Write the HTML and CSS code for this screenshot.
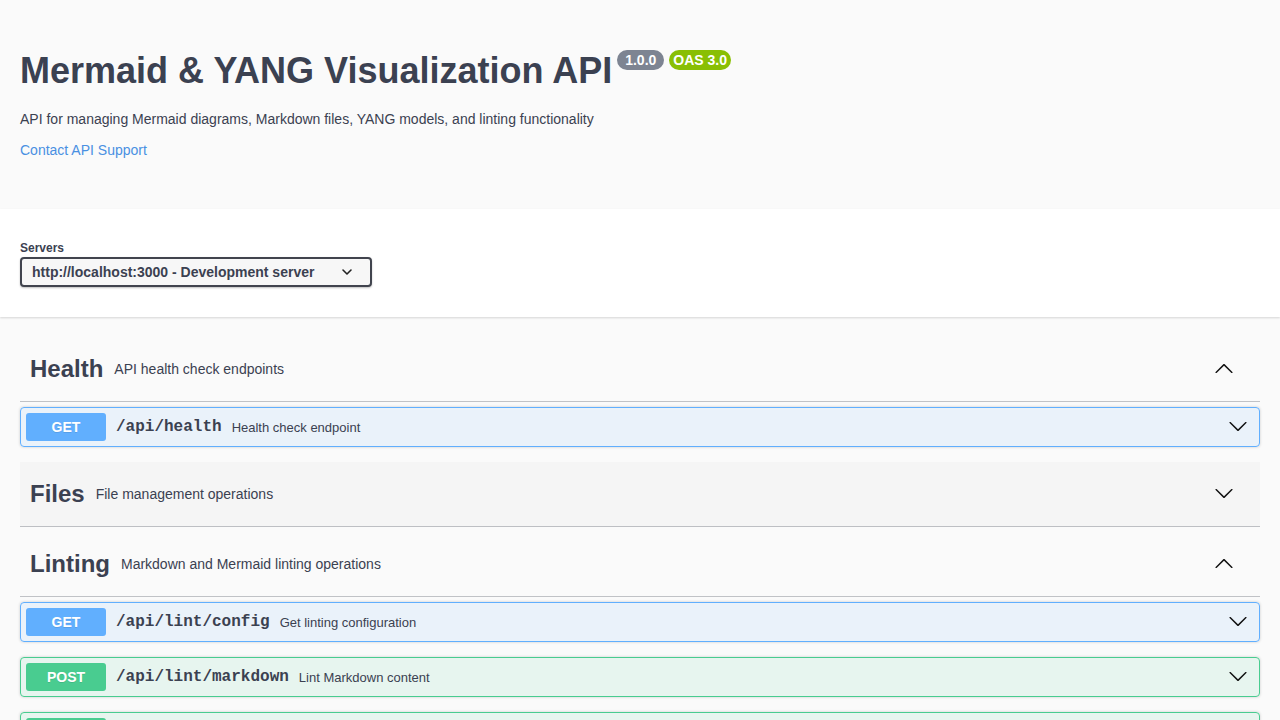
FILE: index.html
```html
<!DOCTYPE html>
<html lang="en">
<head>
<meta charset="utf-8">
<title>Mermaid &amp; YANG Visualization API</title>
<link rel="stylesheet" href="styles.css">
</head>
<body>
<div class="swagger">
  <div class="wrapper">
    <section class="info">
      <h2 class="title">
        <span class="title-text">Mermaid &amp; YANG Visualization API</span>
        <small class="badge badge-version">1.0.0</small>
        <small class="badge badge-oas">OAS 3.0</small>
      </h2>
      <p class="description">API for managing Mermaid diagrams, Markdown files, YANG models, and linting functionality</p>
      <div class="contact"><a class="link" href="#">Contact API Support</a></div>
    </section>
  </div>

  <div class="scheme-container">
    <div class="wrapper">
      <div class="servers-title">Servers</div>
      <div class="select">
        <span class="select-text">http://localhost:3000 - Development server</span>
        <svg class="select-arrow" width="12" height="12" viewBox="0 0 12 12"><polyline points="2,4 6,8 10,4" fill="none" stroke="#222" stroke-width="1.6" stroke-linecap="round" stroke-linejoin="round"/></svg>
      </div>
    </div>
  </div>

  <div class="wrapper">
    <section class="tag-section">
      <h3 class="tag">
        <span class="tag-name">Health</span>
        <small class="tag-desc">API health check endpoints</small>
        <button class="expand"><svg width="20" height="20" viewBox="0 0 20 20"><path d="M17.418 14.908c.272.268.709.268.979 0s.271-.701 0-.969l-7.908-7.83c-.27-.268-.707-.268-.979 0l-7.908 7.83c-.27.268-.27.701 0 .969.271.268.709.268.979 0L10 7.767l7.418 7.141z"/></svg></button>
      </h3>
      <div class="opblock get">
        <div class="summary">
          <span class="method">GET</span>
          <span class="path">/api/health</span>
          <span class="op-desc">Health check endpoint</span>
          <button class="control"><svg width="20" height="20" viewBox="0 0 20 20"><path d="M17.418 6.109c.272-.268.709-.268.979 0s.271.701 0 .969l-7.908 7.83c-.27.268-.707.268-.979 0l-7.908-7.83c-.27-.268-.27-.701 0-.969.271-.268.709-.268.979 0L10 13.25l7.418-7.141z"/></svg></button>
        </div>
      </div>
    </section>

    <section class="tag-section">
      <h3 class="tag tag-hover">
        <span class="tag-name">Files</span>
        <small class="tag-desc">File management operations</small>
        <button class="expand"><svg width="20" height="20" viewBox="0 0 20 20"><path d="M17.418 6.109c.272-.268.709-.268.979 0s.271.701 0 .969l-7.908 7.83c-.27.268-.707.268-.979 0l-7.908-7.83c-.27-.268-.27-.701 0-.969.271-.268.709-.268.979 0L10 13.25l7.418-7.141z"/></svg></button>
      </h3>
    </section>

    <section class="tag-section">
      <h3 class="tag">
        <span class="tag-name">Linting</span>
        <small class="tag-desc">Markdown and Mermaid linting operations</small>
        <button class="expand"><svg width="20" height="20" viewBox="0 0 20 20"><path d="M17.418 14.908c.272.268.709.268.979 0s.271-.701 0-.969l-7.908-7.83c-.27-.268-.707-.268-.979 0l-7.908 7.83c-.27.268-.27.701 0 .969.271.268.709.268.979 0L10 7.767l7.418 7.141z"/></svg></button>
      </h3>
      <div class="opblock get">
        <div class="summary">
          <span class="method">GET</span>
          <span class="path">/api/lint/config</span>
          <span class="op-desc">Get linting configuration</span>
          <button class="control"><svg width="20" height="20" viewBox="0 0 20 20"><path d="M17.418 6.109c.272-.268.709-.268.979 0s.271.701 0 .969l-7.908 7.83c-.27.268-.707.268-.979 0l-7.908-7.83c-.27-.268-.27-.701 0-.969.271-.268.709-.268.979 0L10 13.25l7.418-7.141z"/></svg></button>
        </div>
      </div>
      <div class="opblock post">
        <div class="summary">
          <span class="method">POST</span>
          <span class="path">/api/lint/markdown</span>
          <span class="op-desc">Lint Markdown content</span>
          <button class="control"><svg width="20" height="20" viewBox="0 0 20 20"><path d="M17.418 6.109c.272-.268.709-.268.979 0s.271.701 0 .969l-7.908 7.83c-.27.268-.707.268-.979 0l-7.908-7.83c-.27-.268-.27-.701 0-.969.271-.268.709-.268.979 0L10 13.25l7.418-7.141z"/></svg></button>
        </div>
      </div>
      <div class="opblock post">
        <div class="summary">
          <span class="method">POST</span>
          <span class="path">/api/lint/mermaid</span>
          <span class="op-desc">Lint Mermaid diagram</span>
          <button class="control"><svg width="20" height="20" viewBox="0 0 20 20"><path d="M17.418 6.109c.272-.268.709-.268.979 0s.271.701 0 .969l-7.908 7.83c-.27.268-.707.268-.979 0l-7.908-7.83c-.27-.268-.27-.701 0-.969.271-.268.709-.268.979 0L10 13.25l7.418-7.141z"/></svg></button>
        </div>
      </div>
    </section>
  </div>
</div>
</body>
</html>
```

FILE: styles.css
```css
html, body {
  margin: 0;
  padding: 0;
  background: #fafafa;
}

.swagger {
  font-family: "Liberation Sans", Arial, sans-serif;
  color: #3b4151;
}

.wrapper {
  max-width: 1460px;
  margin: 0 auto;
  padding: 0 20px;
  box-sizing: border-box;
}

/* ---------- info ---------- */
.info {
  margin: 50px 0 48px;
}

.title {
  display: flex;
  align-items: flex-start;
  margin: 0;
  font-size: 36px;
  font-weight: 700;
  line-height: 41px;
  color: #3b4151;
}

.badge {
  display: inline-block;
  margin-left: 5px;
  margin-top: 0;
  font-size: 14px;
  font-weight: 700;
  line-height: 16px;
  color: #fff;
  border-radius: 57px;
}

.badge-version {
  background: #7d8492;
  padding: 2px 8px;
}

.badge-oas {
  background: #89bf04;
  padding: 2px 4px;
}

.description {
  margin: 18px 0 0;
  font-size: 14px;
  line-height: 21px;
}

.contact {
  margin-top: 10px;
  font-size: 14px;
  line-height: 21px;
}

.link {
  color: #4990e2;
  text-decoration: none;
}

/* ---------- servers ---------- */
.scheme-container {
  background: #fff;
  box-shadow: 0 1px 2px 0 rgba(0, 0, 0, .15);
  padding: 30px 0;
  margin: 0 0 20px;
}

.servers-title {
  font-size: 12px;
  font-weight: 700;
  line-height: 18px;
}

.select {
  display: flex;
  align-items: center;
  width: 352px;
  height: 30px;
  box-sizing: border-box;
  padding: 0 17px 0 10px;
  border: 2px solid #41444e;
  border-radius: 4px;
  background: #f7f7f7;
  box-shadow: 0 1px 2px 0 rgba(0, 0, 0, .25);
  font-size: 14px;
  font-weight: 700;
}

.select-text {
  flex: 1;
  white-space: nowrap;
}

.select-arrow {
  flex: none;
}

/* ---------- tags ---------- */
.tag-section {
  display: flex;
  flex-direction: column;
}

.tag {
  display: flex;
  align-items: center;
  height: 65px;
  box-sizing: border-box;
  margin: 0 0 5px;
  padding: 0 20px 0 10px;
  border-bottom: 1px solid rgba(59, 65, 81, .3);
  font-size: 24px;
  font-weight: 700;
  color: #3b4151;
}

.tag-hover {
  background: rgba(0, 0, 0, .02);
}

.tag-name {
  white-space: nowrap;
}

.tag-desc {
  flex: 1;
  padding: 0 10px 0 11px;
  font-size: 14px;
  font-weight: 400;
}

.expand,
.control {
  display: flex;
  align-items: center;
  border: none;
  background: none;
  padding: 0 6px 2px;
  cursor: pointer;
}

.expand svg,
.control svg {
  fill: #111;
}

/* ---------- opblocks ---------- */
.opblock {
  margin: 0 0 15px;
  border: 1px solid #000;
  border-radius: 4px;
  box-shadow: 0 0 3px rgba(0, 0, 0, .19);
}

.opblock.get {
  background: rgba(97, 175, 254, .1);
  border-color: #61affe;
}

.opblock.post {
  background: rgba(73, 204, 144, .1);
  border-color: #49cc90;
}

.summary {
  display: flex;
  align-items: center;
  padding: 5px;
}

.method {
  min-width: 80px;
  padding: 6px 0;
  border-radius: 3px;
  font-size: 14px;
  font-weight: 700;
  line-height: 16px;
  text-align: center;
  color: #fff;
  text-shadow: 0 1px 0 rgba(0, 0, 0, .1);
}

.get .method {
  background: #61affe;
}

.post .method {
  background: #49cc90;
}

.path {
  padding: 0 10px;
  font-family: "Liberation Mono", "Courier New", monospace;
  font-size: 16px;
  font-weight: 700;
  color: #3b4151;
}

.op-desc {
  flex: 1;
  font-size: 13px;
  color: #3b4151;
}
```
